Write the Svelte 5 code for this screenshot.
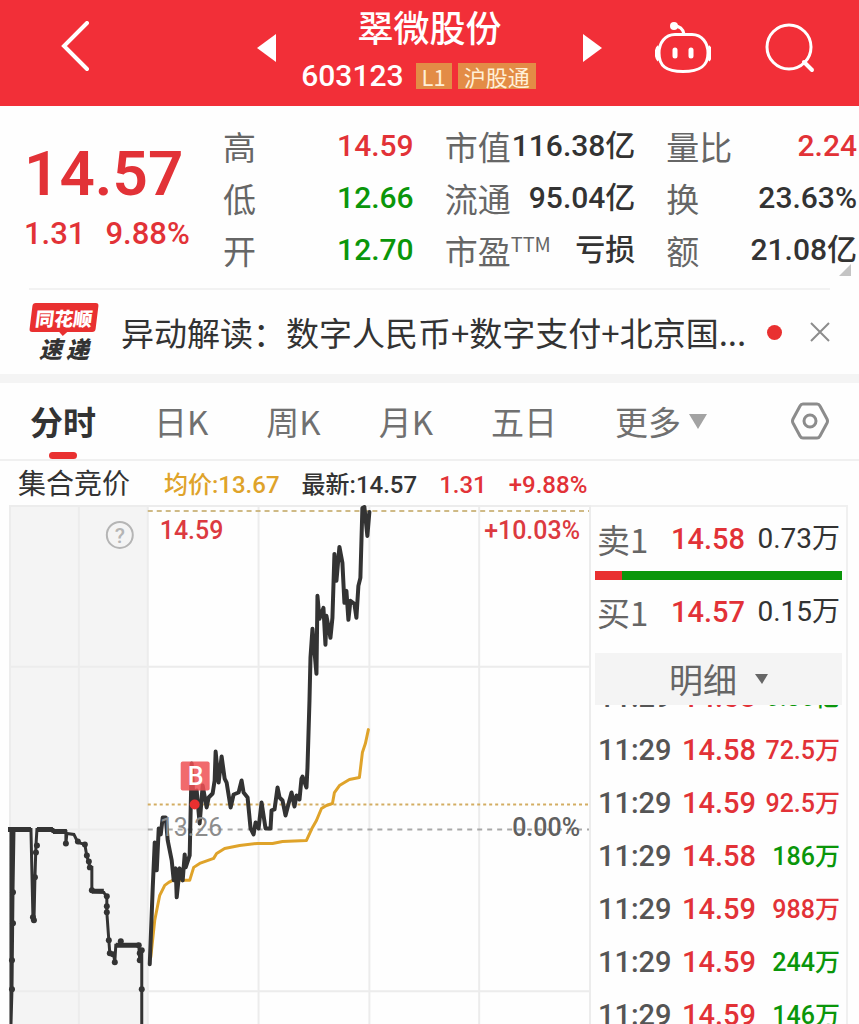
<script>
  import { onMount } from "svelte";

  const stats = [
    [
      { label: "高", value: "14.59", tone: "up" },
      { label: "低", value: "12.66", tone: "down" },
      { label: "开", value: "12.70", tone: "down" },
    ],
    [
      { label: "市值", value: "116.38亿" },
      { label: "流通", value: "95.04亿" },
      { label: "市盈", sup: "TTM", value: "亏损" },
    ],
    [
      { label: "量比", value: "2.24", tone: "up" },
      { label: "换", value: "23.63%" },
      { label: "额", value: "21.08亿" },
    ],
  ];

  const tabs = ["分时", "日K", "周K", "月K", "五日", "更多"];
  let activeTab = "分时";

  const trades = [
    { time: "11:29", price: "14.58", vol: "0.30亿", tone: "down" },
    { time: "11:29", price: "14.58", vol: "72.5万", tone: "up" },
    { time: "11:29", price: "14.59", vol: "92.5万", tone: "up" },
    { time: "11:29", price: "14.58", vol: "186万", tone: "down" },
    { time: "11:29", price: "14.59", vol: "988万", tone: "up" },
    { time: "11:29", price: "14.59", vol: "244万", tone: "down" },
    { time: "11:29", price: "14.59", vol: "146万", tone: "down" },
  ];

  // buy side share of the first level, in percent
  const buyShare = 11;

  const priceLine =
    "150,460 153,383 155,338 157,366 159,324 161,330 163,313 166,313 168,336 172,356 174,376 176,364 177,393 180,364 183,376 185,350 186,363 190,351 192,259 194,299 197,286 200,319 203,281 207,303 209,293 213,289 215,276 216,247 219,278 222,252 225,274 227,278 231,303 234,290 239,288 242,276 244,288 248,293 251,324 254,330 256,318 259,324 262,298 266,324 271,324 272,306 275,305 278,283 280,293 283,296 286,311 292,288 295,302 297,291 300,295 302,274 303,272 307,283 308,263 310,196 311,153 313,124 317,169 318,91 320,114 324,103 326,140 327,111 331,133 333,113 335,49 337,76 340,42 343,58 345,98 347,86 349,115 351,96 355,99 357,113 359,81 361,73 363,3 365,2 368,31 370,7";
  const avgLine =
    "151,453 155,416 160,391 165,381 169,378 173,376 190,376 194,363 200,359 214,354 217,349 225,344 240,341 258,339 273,339 283,337 307,336 313,323 317,316 322,304 327,301 333,299 335,288 340,281 350,275 360,273 363,248 366,239 369,225";
  const auctionLine =
    "9,325 11,325 11,520 12,485 13,388 14,325 31,325 33,414 34,418 35,373 36,341 37,325 53,325 53,327 66,327 66,339 67,329 74,330 78,338 85,340 87,352 89,358 90,363 92,363 92,387 104,388 107,393 107,408 109,436 110,449 114,451 115,458 116,441 120,441 121,437 122,441 139,441 140,456 142,446 142,520";
  const auctionDots = [
    [13, 388], [13, 419], [12, 456], [12, 485], [33, 413], [34, 416],
    [35, 373], [36, 348], [37, 341], [66, 339], [78, 337], [85, 340], [87, 351],
    [89, 357], [90, 363], [92, 386], [107, 392], [107, 402], [107, 408],
    [109, 436], [110, 449], [113, 450], [115, 458], [121, 437], [139, 441],
    [140, 449], [140, 456], [142, 446], [142, 485],
  ];

  let list;

  onMount(() => {
    list.scrollTop = 34;
  });
</script>

<div class="page">
  <header>
    <button class="icon back" aria-label="返回">
      <svg width="32" height="54" viewBox="0 0 32 54">
        <path d="M27 2 L4 25 L27 48" fill="none" stroke="#fff" stroke-width="4" stroke-linecap="round" />
      </svg>
    </button>
    <div class="stock">
      <button class="icon" aria-label="上一只">
        <svg width="20" height="28" viewBox="0 0 20 28"><path d="M19 0 V28 L0 14 Z" fill="#fff" /></svg>
      </button>
      <div class="name">
        <h1>翠微股份</h1>
        <div class="code">
          <span class="num">603123</span>
          <em>L1</em>
          <em>沪股通</em>
        </div>
      </div>
      <button class="icon" aria-label="下一只">
        <svg width="20" height="28" viewBox="0 0 20 28"><path d="M1 0 V28 L20 14 Z" fill="#fff" /></svg>
      </button>
    </div>
    <div class="tools">
      <button class="icon" aria-label="助手">
        <svg width="56" height="52" viewBox="0 0 56 52" fill="none" stroke="#fff" stroke-width="3">
          <circle cx="19" cy="4" r="4" fill="#fff" stroke="none" />
          <path d="M19 4 C25 4 28 7 29 12" />
          <path d="M20 12.500 H37 C47 12.500 53 21 53 31 C53 44 45 49.500 28 49.500 C11 49.500 4 44 4 31 C4 21 10 12.500 20 12.500 Z" />
          <path d="M4 25 C1 27 1 35 4 38 M53 25 C56 27 56 35 53 38" stroke-width="4" />
          <path d="M20 28 V34 M36 28 V34" stroke-width="5" stroke-linecap="round" />
        </svg>
      </button>
      <button class="icon" aria-label="搜索">
        <svg width="50" height="50" viewBox="0 0 50 50" fill="none" stroke="#fff" stroke-width="3">
          <circle cx="24" cy="24" r="22" />
          <path d="M39 39 L47 47" stroke-width="4" stroke-linecap="round" />
        </svg>
      </button>
    </div>
  </header>

  <section class="quote">
    <div class="last up num">
      <strong>14.57</strong>
      <p><span>1.31</span><span>9.88%</span></p>
    </div>
    {#each stats as column}
      <dl>
        {#each column as item}
          <div>
            <dt>{item.label}{#if item.sup}<sup>{item.sup}</sup>{/if}</dt>
            <dd class="num {item.tone}">{item.value}</dd>
          </div>
        {/each}
      </dl>
    {/each}
    <span class="corner"></span>
  </section>

  <section class="news">
    <div class="brand">
      <b>同花顺</b>
      <i><span>速</span><span>递</span></i>
    </div>
    <a href="#news">异动解读：数字人民币+数字支付+北京国...</a>
    <span class="dot"></span>
    <button class="icon" aria-label="关闭">
      <svg width="20" height="20" viewBox="0 0 20 20">
        <path d="M1 1 L19 19 M19 1 L1 19" stroke="#8c8c8c" stroke-width="2" />
      </svg>
    </button>
  </section>

  <nav>
    {#each tabs as tab}
      <button class="tab" class:active={tab === activeTab} on:click={() => (activeTab = tab)}>
        {tab}
        {#if tab === "更多"}
          <svg width="18" height="15" viewBox="0 0 18 15"><path d="M0 0 H18 L9 15 Z" fill="#a3a3a3" /></svg>
        {/if}
      </button>
    {/each}
    <button class="icon settings" aria-label="设置">
      <svg width="38" height="38" viewBox="0 0 38 38" fill="none" stroke="#8c8c8c" stroke-width="3">
        <path d="M12 2 H26 Q28 2 29 4 L36 17 Q37 19 36 21 L29 34 Q28 36 26 36 H12 Q10 36 9 34 L2 21 Q1 19 2 17 L9 4 Q10 2 12 2 Z" />
        <circle cx="19" cy="19" r="6" />
      </svg>
    </button>
  </nav>

  <div class="legend num">
    <span class="auction">集合竞价</span>
    <span class="avg">均价:13.67</span>
    <span>最新:14.57</span>
    <span class="up">1.31</span>
    <span class="up">+9.88%</span>
  </div>

  <main>
    <svg class="chart num" viewBox="0 0 592 520" role="img" aria-label="分时走势">
      <rect x="9" y="0" width="139" height="520" fill="#f4f4f4" />
      <g stroke="#ececec" stroke-width="2">
        <path d="M9 1 H591 M9 162 H591 M9 325 H148 M9 487 H591" />
        <path d="M10 0 V520 M79 0 V520 M148 0 V520 M259 0 V520 M370 0 V520 M480 0 V520 M591 0 V520" />
      </g>
      <path d="M148 6 H590" stroke="#cfba86" stroke-width="2" stroke-dasharray="5 4" />
      <path d="M148 300 H590" stroke="#d3ad62" stroke-width="2" stroke-dasharray="3 3" />
      <path d="M148 325 H590" stroke="#a8a8a8" stroke-width="2" stroke-dasharray="5 5" />

      <circle cx="120" cy="30" r="13" fill="none" stroke="#b5b5b5" stroke-width="2" />
      <text class="help" x="120" y="38" text-anchor="middle">?</text>

      <polyline points={auctionLine} fill="none" stroke="#333" stroke-width="3" />
      <path d="M8 325 H31 M37 325 H53 M53 327 H67 M92 387 H104 M116 441 H139" stroke="#333" stroke-width="5" />
      {#each auctionDots as [x, y]}
        <circle cx={x} cy={y} r="3" fill="#333" />
      {/each}

      <polyline points={avgLine} class="line" stroke="#dfa32a" />
      <polyline points={priceLine} class="line price" stroke="#333" />

      <rect x="181" y="257" width="29" height="29" rx="2" fill="#ee5054" fill-opacity="0.85" />
      <text class="mark" x="196" y="280" text-anchor="middle">B</text>
      <circle cx="195" cy="300" r="5" fill="#e93030" />

      <text class="red" x="160" y="34">14.59</text>
      <text class="red" x="581" y="34" text-anchor="end">+10.03%</text>
      <text class="base" x="160" y="332">13.26</text>
      <text class="zero" x="581" y="332" text-anchor="end">0.00%</text>
    </svg>

    <aside>
      <div class="level">
        <span>卖1</span>
        <b class="num up">14.58</b>
        <span class="num vol">0.73万</span>
      </div>
      <div class="ratio"><span style="width: {buyShare}%"></span></div>
      <div class="level">
        <span>买1</span>
        <b class="num up">14.57</b>
        <span class="num vol">0.15万</span>
      </div>
      <button class="detail">
        明细
        <svg width="13" height="10" viewBox="0 0 13 10"><path d="M0 0 H13 L7 10 Z" fill="#666" /></svg>
      </button>
      <div class="list" bind:this={list}>
        <table class="num">
          <tbody>
            {#each trades as t}
              <tr>
                <td>{t.time}</td>
                <td class="up">{t.price}</td>
                <td class={t.tone}>{t.vol}</td>
              </tr>
            {/each}
          </tbody>
        </table>
      </div>
    </aside>
  </main>
</div>

<style>
  :global(body) {
    margin: 0;
    background: #fefefe;
  }

  .page {
    font-family: "Noto Sans CJK SC", sans-serif;
    color: #333;
    overflow: hidden;
  }

  .num {
    font-family: Roboto, "Noto Sans CJK SC", sans-serif;
    font-weight: 500;
  }

  .up {
    color: #e23237;
  }

  .down {
    color: #0a960a;
  }

  button {
    font: inherit;
    color: inherit;
    border: 0;
    padding: 0;
    background: none;
    cursor: pointer;
  }

  .icon {
    display: flex;
  }

  /* header */
  header {
    display: grid;
    grid-template-columns: 1fr 346px 1fr;
    align-items: center;
    padding: 0 44px 10px;
    background: #f22f38;
    color: #fff;
  }

  .back {
    margin-left: 16px;
  }

  .stock {
    display: flex;
    align-items: center;
    justify-content: space-between;
  }

  .name {
    display: flex;
    flex-direction: column;
    align-items: center;
    gap: 10px;
    padding-top: 6px;
  }

  h1 {
    margin: 0;
    font-size: 36px;
    line-height: 40px;
    font-weight: 500;
  }

  .code {
    display: flex;
    align-items: center;
    gap: 6px;
    height: 40px;
    margin-right: 22px;
    font-size: 30px;
    line-height: 40px;
  }

  .code em {
    padding: 0 6px;
    background: #e38c46;
    color: #fff0d8;
    font-size: 22px;
    line-height: 26px;
    font-style: normal;
  }

  .code .num {
    margin-right: 6px;
  }

  .tools {
    display: flex;
    justify-content: flex-end;
    align-items: center;
    gap: 54px;
  }

  /* quote */
  .quote {
    position: relative;
    display: grid;
    grid-template-columns: 168px repeat(3, 1fr);
    column-gap: 31px;
    padding: 14px 2px 12px 24px;
  }

  .last strong {
    display: block;
    margin-top: 15px;
    font-size: 62px;
    line-height: 78px;
    font-weight: 600;
  }

  .last p {
    display: flex;
    gap: 20px;
    margin: 0;
    font-size: 31px;
    line-height: 42px;
  }

  dl {
    margin: 0;
  }

  dl div {
    display: flex;
    justify-content: space-between;
    height: 52px;
    line-height: 52px;
    white-space: nowrap;
  }

  dt {
    font-size: 33px;
    color: #666;
  }

  dt sup {
    font-size: 20px;
    line-height: 20px;
  }

  dd {
    margin: 0;
    font-size: 30px;
  }

  .corner {
    position: absolute;
    right: 8px;
    bottom: 12px;
    border: solid transparent;
    border-width: 6px;
    border-right-color: #c4c4c4;
    border-bottom-color: #c4c4c4;
  }

  /* news */
  .news {
    display: flex;
    align-items: center;
    height: 84px;
    margin: 0 29px;
    border-top: 2px solid #f2f2f2;
  }

  .brand {
    display: flex;
    flex-direction: column;
    align-items: center;
    gap: 2px;
    width: 70px;
    margin-right: 22px;
    font-weight: 900;
  }

  .brand b {
    position: relative;
    width: 66px;
    border-radius: 3px;
    background: #e93030;
    color: #fff;
    font-size: 19px;
    line-height: 29px;
    font-weight: 900;
    text-align: center;
    transform: skewX(-7deg);
  }

  .brand b::after {
    content: "";
    position: absolute;
    left: 30px;
    top: 100%;
    border: 4px solid transparent;
    border-top-color: #e93030;
  }

  .brand i {
    display: flex;
    gap: 4px;
    font-size: 23px;
    line-height: 28px;
  }

  .news a {
    flex: 1;
    overflow: hidden;
    color: #333;
    font-size: 33px;
    line-height: 48px;
    text-decoration: none;
    white-space: nowrap;
  }

  .dot {
    width: 15px;
    height: 15px;
    margin: 0 28px 0 8px;
    border-radius: 50%;
    background: #e93030;
  }

  /* tabs */
  nav {
    display: flex;
    align-items: center;
    gap: 58px;
    height: 76px;
    padding: 0 30px;
    border-top: 9px solid #f4f4f4;
    border-bottom: 2px solid #f0f0f0;
  }

  .tab {
    position: relative;
    display: flex;
    align-items: center;
    gap: 8px;
    font-size: 33px;
    line-height: 76px;
    color: #707070;
  }

  .tab.active {
    font-weight: 700;
    color: #333;
  }

  .tab.active::after {
    content: "";
    position: absolute;
    left: 50%;
    bottom: 0;
    width: 28px;
    height: 7px;
    margin-left: -14px;
    border-radius: 4px;
    background: #e93030;
  }

  .settings {
    margin-left: auto;
  }

  .legend {
    display: flex;
    gap: 22px;
    padding: 4px 0 0 18px;
    font-size: 24px;
    line-height: 40px;
    white-space: nowrap;
  }

  .legend .auction {
    margin-right: 12px;
    font-size: 28px;
    font-weight: 400;
  }

  .legend .avg {
    color: #dfa32a;
  }

  /* chart */
  main {
    display: flex;
    align-items: flex-start;
    padding-right: 11px;
  }

  .chart {
    flex: 1;
    min-width: 0;
    font-size: 25px;
  }

  .line {
    fill: none;
    stroke-width: 3;
    stroke-linejoin: round;
    stroke-linecap: round;
  }

  .price {
    stroke-width: 4;
  }

  .red {
    fill: #dc3a40;
  }

  .base {
    fill: #8c8c8c;
    font-weight: 400;
  }

  .zero {
    fill: #606060;
  }

  .mark {
    fill: #fff;
  }

  .help {
    fill: #b5b5b5;
    font-size: 21px;
  }

  /* order book */
  aside {
    width: 247px;
    padding: 0 4px;
    border-top: 2px solid #f0f0f0;
    border-right: 2px solid #f0f0f0;
  }

  .level {
    display: grid;
    grid-template-columns: 74px 76px 1fr;
    line-height: 64px;
    font-size: 33px;
    white-space: nowrap;
    color: #666;
    padding: 0 2px;
  }

  .level b {
    font-size: 29px;
  }

  .level .vol {
    font-size: 28px;
    color: #333;
    font-weight: 400;
    text-align: right;
  }

  .ratio {
    height: 9px;
    background: #0a960a;
  }

  .ratio span {
    display: block;
    height: 100%;
    background: #e93030;
  }

  .detail {
    display: flex;
    align-items: center;
    justify-content: center;
    gap: 18px;
    width: 100%;
    margin-top: 9px;
    background: #f4f4f4;
    color: #666;
    font-size: 34px;
    line-height: 52px;
  }

  .list {
    height: 320px;
    overflow-y: auto;
    scrollbar-width: none;
  }

  table {
    width: 100%;
    border-collapse: collapse;
    table-layout: fixed;
    font-size: 29px;
    white-space: nowrap;
  }

  tr {
    height: 53px;
  }

  td {
    padding: 0;
    line-height: 53px;
    color: #555;
  }

  td:first-child {
    width: 84px;
    padding-left: 3px;
  }

  td:last-child {
    width: 80px;
    padding-right: 2px;
    font-size: 25px;
    text-align: right;
  }

  td.up {
    color: #e23237;
  }

  td.down {
    color: #0a960a;
  }
</style>
